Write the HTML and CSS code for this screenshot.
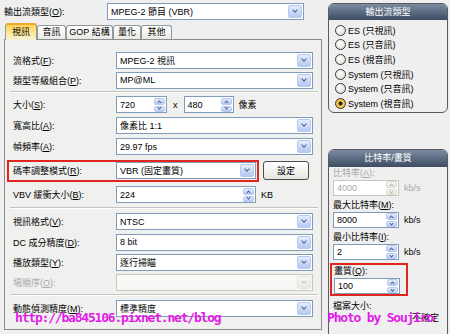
FILE: index.html
```html
<!DOCTYPE html>
<html lang="zh-TW">
<head>
    <meta charset="UTF-8">
    <title>視訊設定</title>
    <link rel="stylesheet" href="styles.css">
</head>
<body>
    <div class="app">
        <div class="main">
            <div class="top-row">
                <span class="lbl top-lbl">輸出流類型(<u>O</u>):</span>
                <div class="combo top-combo"><span>MPEG-2 節目 (VBR)</span><i class="drop"></i></div>
            </div>

            <div class="tabs">
                <div class="tab active" style="width: 32px;">視訊</div>
                <div class="tab" style="width: 29px;">音訊</div>
                <div class="tab" style="width: 47px;">GOP 結構</div>
                <div class="tab" style="width: 28px;">量化</div>
                <div class="tab" style="width: 31px;">其他</div>
            </div>

            <div class="panel">
                <div class="row tight">
                    <span class="lbl">流格式(<u>F</u>):</span>
                    <div class="combo"><span>MPEG-2 視訊</span><i class="drop"></i></div>
                </div>
                <div class="row tight">
                    <span class="lbl">類型等級組合(<u>P</u>):</span>
                    <div class="combo"><span>MP@ML</span><i class="drop"></i></div>
                </div>
                <div class="sep"></div>
                <div class="row">
                    <span class="lbl">大小(<u>S</u>):</span>
                    <div class="spin size-w"><span>720</span><i class="arrows"><b class="up"></b><b class="dn"></b></i></div>
                    <span class="times">x</span>
                    <div class="spin size-h"><span>480</span><i class="arrows"><b class="up"></b><b class="dn"></b></i></div>
                    <span class="unit">像素</span>
                </div>
                <div class="row">
                    <span class="lbl">寬高比(<u>A</u>):</span>
                    <div class="combo"><span>像素比 1:1</span><i class="drop"></i></div>
                </div>
                <div class="row">
                    <span class="lbl">幀頻率(<u>A</u>):</span>
                    <div class="combo"><span>29.97 fps</span><i class="drop"></i></div>
                </div>
                <div class="row rate">
                    <div class="hl">
                        <span class="lbl">碼率調整模式(<u>R</u>):</span>
                        <div class="combo"><span>VBR (固定畫質)</span><i class="drop"></i></div>
                    </div>
                    <div class="btn">設定</div>
                </div>
                <div class="row">
                    <span class="lbl">VBV 緩衝大小(<u>B</u>):</span>
                    <div class="spin vbv"><span>224</span><i class="arrows"><b class="up"></b><b class="dn"></b></i></div>
                    <span class="unit">KB</span>
                </div>
                <div class="sep gap"></div>
                <div class="row">
                    <span class="lbl">視訊格式(<u>V</u>):</span>
                    <div class="combo"><span>NTSC</span><i class="drop"></i></div>
                </div>
                <div class="row tight">
                    <span class="lbl">DC 成分精度(<u>D</u>):</span>
                    <div class="combo"><span>8 bit</span><i class="drop"></i></div>
                </div>
                <div class="row tight">
                    <span class="lbl">播放類型(<u>Y</u>):</span>
                    <div class="combo"><span>逐行掃瞄</span><i class="drop"></i></div>
                </div>
                <div class="row tight">
                    <span class="lbl dis">場順序(<u>O</u>):</span>
                    <div class="combo off"><span></span><i class="drop"></i></div>
                </div>
                <div class="sep mid"></div>
                <div class="row">
                    <span class="lbl">動態偵測精度(<u>M</u>):</span>
                    <div class="combo"><span>標準精度</span><i class="drop"></i></div>
                </div>
            </div>
        </div>

        <div class="side">
            <div class="group stream">
                <div class="ghead">輸出流類型</div>
                <div class="radios">
                    <div class="radio">ES (只視訊)</div>
                    <div class="radio">ES (只音訊)</div>
                    <div class="radio">ES (視音訊)</div>
                    <div class="radio">System (只視訊)</div>
                    <div class="radio">System (只音訊)</div>
                    <div class="radio on">System (視音訊)</div>
                </div>
            </div>

            <div class="group bitrate">
                <div class="ghead">比特率/畫質</div>
                <div class="gbody">
                    <div class="blbl dis">比特率(<u>A</u>):</div>
                    <div class="srow">
                        <div class="spin small off"><span>4000</span><i class="arrows"><b class="up"></b><b class="dn"></b></i></div>
                        <span class="unit dis">kb/s</span>
                    </div>
                    <div class="blbl">最大比特率(<u>M</u>):</div>
                    <div class="srow">
                        <div class="spin small"><span>8000</span><i class="arrows"><b class="up"></b><b class="dn"></b></i></div>
                        <span class="unit">kb/s</span>
                    </div>
                    <div class="blbl">最小比特率(<u>I</u>):</div>
                    <div class="srow">
                        <div class="spin small"><span>2</span><i class="arrows"><b class="up"></b><b class="dn"></b></i></div>
                        <span class="unit">kb/s</span>
                    </div>
                    <div class="hl2">
                        <div class="blbl">畫質(<u>Q</u>):</div>
                        <div class="srow">
                            <div class="spin small"><span>100</span><i class="arrows"><b class="up"></b><b class="dn"></b></i></div>
                        </div>
                    </div>
                    <div class="blbl size-lbl">檔案大小:</div>
                    <div class="blbl size-val">不確定</div>
                </div>
            </div>
        </div>
    </div>

    <div class="wm wm-url">http://ba845106.pixnet.net/blog</div>
    <div class="wm wm-by">Photo by Soujiro</div>
</body>
</html>
```

FILE: styles.css
```css
body {
    margin: 0;
    width: 450px;
    height: 334px;
    overflow: hidden;
    position: relative;
    background: #efefef;
    font-family: "Liberation Sans Narrow", "Liberation Sans", "Noto Sans CJK TC", sans-serif;
    font-size: 9px;
    color: #000;
}
u {
    text-decoration: underline;
}
.app {
    display: flex;
    gap: 6px;
    padding: 3px 0 0 4px;
}
.main {
    width: 318px;
    display: flex;
    flex-direction: column;
}
.top-row {
    display: flex;
    align-items: center;
    height: 17px;
}
.top-lbl {
    width: 129px;
}
.top-combo {
    width: 185px;
}
.tabs {
    display: flex;
    align-items: flex-end;
    height: 16px;
    margin-top: 3px;
    padding-left: 1px;
}
.tab {
    box-sizing: border-box;
    height: 14px;
    border: 1px solid #919b9c;
    border-bottom: none;
    border-radius: 3px 3px 0 0;
    background: linear-gradient(#ffffff, #e9e9e4);
    text-align: center;
    line-height: 13px;
    white-space: nowrap;
}
.tab.active {
    height: 17px;
    margin-bottom: -1px;
    position: relative;
    border-top: 2px solid #f0a92a;
    background: linear-gradient(#ffd256, #ffeaa0 60%, #f7f1dc);
    line-height: 14px;
}
.panel {
    box-sizing: border-box;
    height: 291px;
    border: 1px solid #8c8c8c;
    background: #f0f0ee;
    padding: 10px 8px 0 8px;
}
.row {
    display: flex;
    align-items: center;
    height: 21px;
}
.row.tight {
    height: 20px;
}
.row.rate {
    height: 27px;
}
.lbl {
    width: 103px;
    white-space: nowrap;
}
.dis {
    color: #a9a9a9;
}
.sep {
    height: 0;
    border-top: 1px solid #c4c4c2;
    border-bottom: 1px solid #ffffff;
    margin: 1px -5px 1px -3px;
}
.sep.gap {
    margin-top: 2px;
    margin-bottom: 2px;
}
.sep.mid {
    margin-top: 2px;
    margin-bottom: 2px;
}
.combo {
    box-sizing: border-box;
    width: 197px;
    height: 17px;
    display: flex;
    align-items: center;
    border: 1px solid #7f9db9;
    background: #fff;
    padding-left: 3px;
}
.combo span {
    flex: 1;
    white-space: nowrap;
}
.drop {
    box-sizing: border-box;
    width: 14px;
    height: 13px;
    margin-right: 1px;
    border: 1px solid #b7c9f1;
    border-radius: 2px;
    background: linear-gradient(#e4ecfc, #b5c9f3);
    display: flex;
    align-items: center;
    justify-content: center;
}
.drop::after {
    content: '';
    width: 3px;
    height: 3px;
    border-right: 1.6px solid #4d6185;
    border-bottom: 1.6px solid #4d6185;
    transform: rotate(45deg);
    margin-top: -3px;
}
.combo.off {
    border-color: #c9c7ba;
    background: #f8f8f6;
}
.combo.off .drop {
    border-color: #e4e3dc;
    background: linear-gradient(#f7f7f4, #e9e8e2);
}
.combo.off .drop::after {
    border-color: #c5c4bc;
}
.spin {
    box-sizing: border-box;
    height: 17px;
    display: flex;
    align-items: center;
    border: 1px solid #7f9db9;
    background: #fff;
    padding-left: 3px;
}
.spin span {
    flex: 1;
}
.arrows {
    display: flex;
    flex-direction: column;
    gap: 1px;
    width: 11px;
    height: 14px;
    margin-right: 1px;
}
.arrows b {
    flex: 1;
    box-sizing: border-box;
    border: 1px solid #b7c9f1;
    border-radius: 2px;
    background: linear-gradient(#e4ecfc, #b5c9f3);
    display: flex;
    align-items: center;
    justify-content: center;
}
.arrows b::after {
    content: '';
    width: 2px;
    height: 2px;
    border-left: 1.4px solid #4d6185;
    border-top: 1.4px solid #4d6185;
    transform: rotate(45deg);
    margin-top: 2px;
}
.arrows b.dn::after {
    transform: rotate(225deg);
    margin-top: -2px;
}
.spin.off {
    border-color: #c9c7ba;
    color: #a9a9a9;
}
.spin.off .arrows b {
    border-color: #dcdbd4;
    background: linear-gradient(#f7f7f4, #e6e5df);
}
.spin.off .arrows b::after {
    border-color: #b9b8b0;
}
.size-w {
    width: 51px;
}
.size-h {
    width: 50px;
}
.times {
    margin: 0 6px;
}
.unit {
    margin-left: 5px;
    white-space: nowrap;
}
.vbv {
    width: 140px;
}
.hl {
    box-sizing: border-box;
    display: flex;
    align-items: center;
    height: 22px;
    margin-left: -6px;
    padding: 1px 1px 1px 4px;
    border: 2px solid #e0261f;
}
.hl .combo {
    width: 140px;
}
.btn {
    box-sizing: border-box;
    width: 46px;
    height: 19px;
    margin-left: 4px;
    border: 1px solid #4c4c4c;
    border-radius: 3px;
    background: linear-gradient(#ffffff, #e6e6e0);
    display: flex;
    align-items: center;
    justify-content: center;
}
.side {
    width: 120px;
    display: flex;
    flex-direction: column;
    gap: 36px;
}
.group {
    box-sizing: border-box;
    border: 1px solid #5b5b5b;
    border-radius: 6px;
    background: #efefef;
    overflow: hidden;
}
.group.stream {
    height: 110px;
}
.group.bitrate {
    height: 190px;
}
.ghead {
    height: 16px;
    line-height: 16px;
    text-align: center;
    color: #fff;
    background: linear-gradient(#7b8ba1, #3d4c62);
}
.bitrate .ghead {
    height: 17px;
    line-height: 17px;
}
.radios {
    padding: 3px 0 0 6px;
}
.radio {
    display: flex;
    align-items: center;
    gap: 2px;
    height: 14.6px;
    white-space: nowrap;
}
.radio::before {
    content: '';
    box-sizing: border-box;
    width: 11px;
    height: 11px;
    border: 1px solid #3a3a3a;
    border-radius: 50%;
    background: radial-gradient(circle at 40% 35%, #ffffff, #d6d6d0);
}
.radio.on::before {
    background: radial-gradient(circle, #262626 0 1.8px, #ffd95e 2.4px, #f0a61c 5px);
}
.gbody {
    padding: 0 0 0 4px;
}
.blbl {
    height: 12px;
    line-height: 12px;
    white-space: nowrap;
}
.srow {
    display: flex;
    align-items: center;
    height: 16px;
    margin: 1px 0 3px;
}
.spin.small {
    width: 66px;
    height: 16px;
}
.hl2 {
    box-sizing: border-box;
    width: 78px;
    margin: 3px 0 0 -3px;
    padding: 0 1px 0 2px;
    border: 2px solid #e0261f;
}
.hl2 .srow {
    margin: 1px 0 0;
}
.size-lbl {
    margin-top: 4px;
}
.size-val {
    text-align: right;
    padding-right: 8px;
}
.wm {
    position: absolute;
    top: 311px;
    font-family: "DejaVu Sans Mono", monospace;
    font-weight: bold;
    font-size: 13px;
    line-height: 13px;
    letter-spacing: -1.2px;
    color: #e31be8;
    white-space: nowrap;
}
.wm-url {
    left: 15px;
}
.wm-by {
    left: 327px;
}
```
